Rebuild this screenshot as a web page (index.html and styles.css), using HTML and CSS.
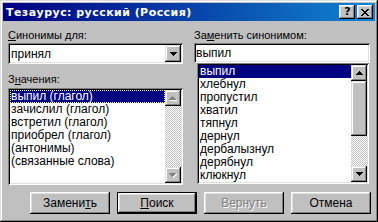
FILE: index.html
```html
<!DOCTYPE html>
<html lang="ru">
<head>
<meta charset="utf-8">
<title>Тезаурус</title>
<link rel="stylesheet" href="styles.css">
</head>
<body>
<div class="window">
  <div class="titlebar">
    <span class="title">Тезаурус: русский (Россия)</span>
    <div class="tbtns">
      <div class="tbtn help">?</div>
      <div class="tbtn close">
        <svg width="8" height="7" viewBox="0 0 8 7" shape-rendering="crispEdges"><g fill="#000"><rect x="0" y="0" width="2" height="1"/><rect x="6" y="0" width="2" height="1"/><rect x="1" y="1" width="2" height="1"/><rect x="5" y="1" width="2" height="1"/><rect x="2" y="2" width="4" height="1"/><rect x="3" y="3" width="2" height="1"/><rect x="2" y="4" width="4" height="1"/><rect x="1" y="5" width="2" height="1"/><rect x="5" y="5" width="2" height="1"/><rect x="0" y="6" width="2" height="1"/><rect x="6" y="6" width="2" height="1"/></g></svg>
      </div>
    </div>
  </div>
  <div class="content">
    <div class="cols">
      <div class="col left">
        <div class="label"><u>С</u>инонимы для:</div>
        <div class="combo field">
          <div class="combo-text">принял</div>
          <div class="arrowbtn">
            <svg width="7" height="4" viewBox="0 0 7 4" shape-rendering="crispEdges"><g fill="#000"><rect x="0" y="0" width="7" height="1"/><rect x="1" y="1" width="5" height="1"/><rect x="2" y="2" width="3" height="1"/><rect x="3" y="3" width="1" height="1"/></g></svg>
          </div>
        </div>
        <div class="label label2">З<u>н</u>ачения:</div>
        <div class="listbox field lb-left">
          <div class="items">
            <div class="item sel focus">выпил (глагол)</div>
            <div class="item">зачислил (глагол)</div>
            <div class="item">встретил (глагол)</div>
            <div class="item">приобрел (глагол)</div>
            <div class="item">(антонимы)</div>
            <div class="item">(связанные слова)</div>
          </div>
          <div class="scrollbar">
            <div class="arrowbtn sb">
              <svg width="8" height="5" viewBox="0 0 8 5" shape-rendering="crispEdges"><g fill="#fff"><rect x="4" y="1" width="1" height="1"/><rect x="3" y="2" width="3" height="1"/><rect x="2" y="3" width="5" height="1"/><rect x="1" y="4" width="7" height="1"/></g><g fill="#808080"><rect x="3" y="0" width="1" height="1"/><rect x="2" y="1" width="3" height="1"/><rect x="1" y="2" width="5" height="1"/><rect x="0" y="3" width="7" height="1"/></g></svg>
            </div>
            <div class="track"></div>
            <div class="arrowbtn sb">
              <svg width="8" height="5" viewBox="0 0 8 5" shape-rendering="crispEdges"><g fill="#fff"><rect x="1" y="1" width="7" height="1"/><rect x="2" y="2" width="5" height="1"/><rect x="3" y="3" width="3" height="1"/><rect x="4" y="4" width="1" height="1"/></g><g fill="#808080"><rect x="0" y="0" width="7" height="1"/><rect x="1" y="1" width="5" height="1"/><rect x="2" y="2" width="3" height="1"/><rect x="3" y="3" width="1" height="1"/></g></svg>
            </div>
          </div>
        </div>
      </div>
      <div class="col right">
        <div class="label">За<u>м</u>енить синонимом:</div>
        <div class="textbox field">выпил</div>
        <div class="listbox field lb-right">
          <div class="items">
            <div class="item sel">выпил</div>
            <div class="item">хлебнул</div>
            <div class="item">пропустил</div>
            <div class="item">хватил</div>
            <div class="item">тяпнул</div>
            <div class="item">дернул</div>
            <div class="item">дербалызнул</div>
            <div class="item">дерябнул</div>
            <div class="item">клюкнул</div>
          </div>
          <div class="scrollbar">
            <div class="arrowbtn sb">
              <svg width="7" height="4" viewBox="0 0 7 4" shape-rendering="crispEdges"><g fill="#000"><rect x="3" y="0" width="1" height="1"/><rect x="2" y="1" width="3" height="1"/><rect x="1" y="2" width="5" height="1"/><rect x="0" y="3" width="7" height="1"/></g></svg>
            </div>
            <div class="thumb"></div>
            <div class="track"></div>
            <div class="arrowbtn sb">
              <svg width="7" height="4" viewBox="0 0 7 4" shape-rendering="crispEdges"><g fill="#000"><rect x="0" y="0" width="7" height="1"/><rect x="1" y="1" width="5" height="1"/><rect x="2" y="2" width="3" height="1"/><rect x="3" y="3" width="1" height="1"/></g></svg>
            </div>
          </div>
        </div>
      </div>
    </div>
    <div class="buttons">
      <div class="btn">Замени<u>т</u>ь</div>
      <div class="btn default"><span class="inner"><u>П</u>оиск</span></div>
      <div class="btn disabled">Вернуть</div>
      <div class="btn">Отмена</div>
    </div>
  </div>
</div>
</body>
</html>
```

FILE: styles.css
```css
html, body {
  margin: 0;
  padding: 0;
  background: #c0c0c0;
}

.window {
  width: 378px;
  height: 222px;
  box-sizing: border-box;
  padding: 3px;
  background: #c0c0c0;
  box-shadow: inset -1px -1px #000, inset 1px 1px #dfdfdf, inset -2px -2px #808080, inset 2px 2px #fff;
  display: flex;
  flex-direction: column;
  font-family: "Liberation Sans", Arial, sans-serif;
  font-size: 11px;
  color: #000;
}

.titlebar {
  height: 18px;
  flex: none;
  background: linear-gradient(90deg, #000080, #1084d0);
  display: flex;
  align-items: center;
  justify-content: space-between;
  padding: 0 2px 0 3px;
}

.title {
  color: #fff;
  font-family: "DejaVu Sans", Verdana, sans-serif;
  font-weight: bold;
  font-size: 11px;
  letter-spacing: 0.45px;
}

.tbtns {
  display: flex;
  gap: 2px;
}

.tbtn {
  width: 16px;
  height: 14px;
  box-sizing: border-box;
  background: #c0c0c0;
  box-shadow: inset -1px -1px #000, inset 1px 1px #fff, inset -2px -2px #808080, inset 2px 2px #dfdfdf;
  display: flex;
  align-items: center;
  justify-content: center;
}

.help {
  font-family: "DejaVu Sans", Verdana, sans-serif;
  font-weight: bold;
  font-size: 11px;
  line-height: 14px;
  padding-left: 1px;
}

.content {
  flex: 1;
  display: flex;
  flex-direction: column;
  padding: 8px 2px 0 5px;
}

.cols {
  display: flex;
  gap: 11px;
}

.col {
  display: flex;
  flex-direction: column;
}

.left { width: 175px; }
.right { width: 176px; }

.label {
  height: 13px;
  line-height: 13px;
  margin-bottom: 1px;
  white-space: nowrap;
}

.label2 {
  margin-top: 9px;
  margin-bottom: 2px;
}

.field {
  background: #fff;
  box-sizing: border-box;
  box-shadow: inset 1px 1px #808080, inset -1px -1px #fff, inset 2px 2px #000, inset -2px -2px #dfdfdf;
  font-size: 12px;
}

.combo {
  height: 21px;
  display: flex;
  align-items: center;
  padding: 2px;
}

.combo-text {
  flex: 1;
  padding-left: 1px;
  line-height: 14px;
}

.arrowbtn {
  width: 16px;
  height: 17px;
  box-sizing: border-box;
  background: #c0c0c0;
  box-shadow: inset -1px -1px #000, inset 1px 1px #dfdfdf, inset -2px -2px #808080, inset 2px 2px #fff;
  display: flex;
  align-items: center;
  justify-content: center;
  flex: none;
}

.arrowbtn svg { display: block; }

.arrowbtn.sb {
  height: 16px;
}

.textbox {
  height: 20px;
  line-height: 16px;
  padding: 2px 2px;
  white-space: nowrap;
}

.listbox {
  display: flex;
  padding: 2px;
  overflow: hidden;
}

.lb-left {
  height: 97px;
}

.lb-right {
  height: 121px;
  margin-left: 3px;
  margin-right: 1px;
}

.items {
  flex: 1;
  display: flex;
  flex-direction: column;
  overflow: hidden;
}

.item {
  height: 13px;
  line-height: 13px;
  padding-left: 1px;
  white-space: nowrap;
  box-sizing: border-box;
  flex: none;
}

.item.sel {
  background: #000080;
  color: #fff;
}

.item.focus {
  outline: 1px dotted #ffff80;
  outline-offset: -1px;
}

.scrollbar {
  width: 16px;
  flex: none;
  display: flex;
  flex-direction: column;
}

.track {
  flex: 1;
  background: repeating-conic-gradient(#c0c0c0 0 25%, #ffffff 0 50%) 0 0 / 2px 2px;
}

.thumb {
  height: 55px;
  flex: none;
  background: #c0c0c0;
  box-shadow: inset -1px -1px #000, inset 1px 1px #dfdfdf, inset -2px -2px #808080, inset 2px 2px #fff;
}

.buttons {
  display: flex;
  gap: 7px;
  padding-left: 22px;
  margin-top: 7px;
}

.btn {
  width: 80px;
  height: 22px;
  box-sizing: border-box;
  background: #c0c0c0;
  box-shadow: inset -1px -1px #000, inset 1px 1px #fff, inset -2px -2px #808080, inset 2px 2px #dfdfdf;
  display: flex;
  align-items: center;
  justify-content: center;
  line-height: 13px;
  font-size: 12px;
}

.btn.default {
  border: 1px solid #000;
  box-shadow: none;
  padding: 0;
}

.btn.default .inner {
  flex: 1;
  align-self: stretch;
  display: flex;
  align-items: center;
  justify-content: center;
  box-shadow: inset -1px -1px #000, inset 1px 1px #fff, inset -2px -2px #808080, inset 2px 2px #dfdfdf;
}

.btn.disabled {
  color: #808080;
  text-shadow: 1px 1px #fff;
}
```
